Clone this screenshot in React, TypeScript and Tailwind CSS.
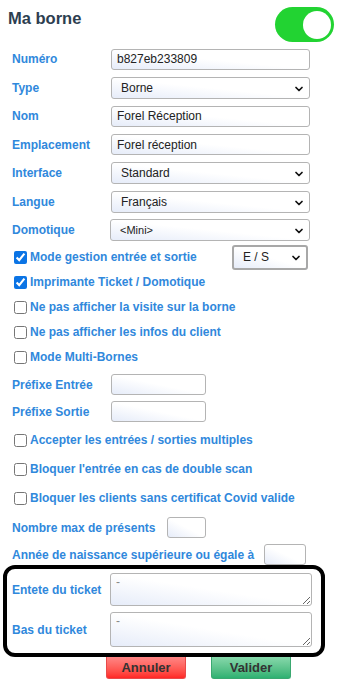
import { ChevronDown } from 'lucide-react';

const font = { fontFamily: '"Liberation Sans", Arial, sans-serif' };

const fieldBg =
  'border border-[#b4b4b4] rounded-[3px] bg-gradient-to-tr from-[#e6ecf9] via-white to-white text-[12px] text-[#222] outline-none';

function TextRow({ label, value }: { label: string; value?: string }) {
  return (
    <div className="flex h-[28.5px] items-center pl-3">
      <label className="w-[99px] text-[12px] font-bold text-[#3088dc]">{label}</label>
      <input readOnly value={value ?? ''} className={`${fieldBg} h-[21px] w-[199px] px-[5px]`} />
    </div>
  );
}

function SelectRow({ label, value, wide }: { label: string; value: string; wide?: boolean }) {
  return (
    <div className="flex h-[28.5px] items-center pl-3">
      <label className={`${wide ? 'w-[98px]' : 'w-[99px]'} text-[12px] font-bold text-[#3088dc]`}>{label}</label>
      <div className={`${fieldBg} relative flex h-[22px] ${wide ? 'w-[200px]' : 'w-[199px]'} items-center pl-[9px]`}>
        <span className={value.startsWith('<') ? 'text-[11px]' : ''}>{value}</span>
        <ChevronDown className="absolute right-[4px] top-[5px] h-[12px] w-[12px] text-[#111]" strokeWidth={3.5} />
      </div>
    </div>
  );
}

function CheckRow({ label, checked, h }: { label: string; checked?: boolean; h: string }) {
  return (
    <div className={`flex ${h} items-center pl-[14px]`}>
      <input type="checkbox" readOnly checked={!!checked} className="m-0 h-[13px] w-[13px] accent-[#0b74e5]" />
      <span className="ml-[3px] text-[12px] font-bold text-[#3088dc]">{label}</span>
    </div>
  );
}

export default function App() {
  return (
    <div style={font} className="h-[690px] w-[343px] overflow-hidden bg-white">
      <div className="flex h-[45px] items-start justify-between">
        <h1 className="pl-2 pt-[6px] text-[16.5px] font-bold text-[#2d3e50]">Ma borne</h1>
        <div className="mr-[9px] mt-[7px] flex h-[35px] w-[59px] items-center justify-end rounded-full bg-[#22d332] pr-[3px]">
          <div className="h-[28px] w-[28px] rounded-full bg-white" />
        </div>
      </div>

      <TextRow label="Numéro" value="b827eb233809" />
      <SelectRow label="Type" value="Borne" />
      <TextRow label="Nom" value="Forel Réception" />
      <TextRow label="Emplacement" value="Forel réception" />
      <SelectRow label="Interface" value="Standard" />
      <SelectRow label="Langue" value="Français" />
      <SelectRow label="Domotique" value="<Mini>" wide />

      <div className="flex h-[25px] items-center pl-[14px]">
        <input type="checkbox" readOnly checked className="m-0 h-[13px] w-[13px] accent-[#0b74e5]" />
        <span className="ml-[3px] w-[202px] text-[12px] font-bold text-[#3088dc]">Mode gestion entrée et sortie</span>
        <div className="relative flex h-[25px] w-[76px] items-center rounded-[3px] border-2 border-[#a8a8a8] bg-gradient-to-tr from-[#e6ecf9] via-white to-white pl-[9px] text-[12px] text-[#222]">
          E / S
          <ChevronDown className="absolute right-[4px] top-[5px] h-[12px] w-[12px] text-[#111]" strokeWidth={3.5} />
        </div>
      </div>
      <CheckRow label="Imprimante Ticket / Domotique" checked h="h-[25px]" />
      <CheckRow label="Ne pas afficher la visite sur la borne" h="h-[25px]" />
      <CheckRow label="Ne pas afficher les infos du client" h="h-[25px]" />
      <CheckRow label="Mode Multi-Bornes" h="h-[25px]" />

      <div className="mt-[1.5px] flex h-[27px] items-center pl-3">
        <label className="w-[99px] text-[12px] font-bold text-[#3088dc]">Préfixe Entrée</label>
        <input readOnly className={`${fieldBg} h-[21px] w-[95px]`} />
      </div>
      <div className="flex h-[27px] items-center pl-3">
        <label className="w-[99px] text-[12px] font-bold text-[#3088dc]">Préfixe Sortie</label>
        <input readOnly className={`${fieldBg} h-[21px] w-[95px]`} />
      </div>

      <CheckRow label="Accepter les entrées / sorties multiples" h="h-[30px]" />
      <CheckRow label="Bloquer l'entrée en cas de double scan" h="h-[28px]" />
      <CheckRow label="Bloquer les clients sans certificat Covid valide" h="h-[30px]" />

      <div className="flex h-[29px] items-center pl-3">
        <label className="w-[155px] text-[12px] font-bold text-[#3088dc]">Nombre max de présents</label>
        <input readOnly className={`${fieldBg} h-[21px] w-[39px]`} />
      </div>
      <div className="flex h-[25px] items-center pl-3">
        <label className="w-[252px] text-[12px] font-bold text-[#3088dc]">Année de naissance supérieure ou égale à</label>
        <input readOnly className={`${fieldBg} h-[21px] w-[42px]`} />
      </div>

      <div className="relative z-10 -mt-[2px] ml-[3px] flex h-[92px] w-[322px] flex-col gap-[6px] rounded-[12px] border-4 border-black pl-[5px] pt-[4px]">
        <div className="flex items-center">
          <label className="w-[98px] text-[12px] font-bold text-[#3088dc]">Entete du ticket</label>
          <textarea readOnly defaultValue="-" className={`${fieldBg} h-[33px] w-[202px] resize px-[5px] pt-[4px] text-[6px] leading-[8px] text-[#888]`} />
        </div>
        <div className="flex items-center">
          <label className="w-[98px] text-[12px] font-bold text-[#3088dc]">Bas du ticket</label>
          <textarea readOnly defaultValue="-" className={`${fieldBg} h-[35px] w-[202px] resize px-[5px] pt-[4px] text-[6px] leading-[8px] text-[#888]`} />
        </div>
      </div>

      <div className="flex gap-[25px] pl-[106px]">
        <button className="h-[22px] w-[80px] rounded-b-[3px] border border-t-0 border-[#e84a4a] bg-gradient-to-b from-[#ff8585] to-[#ff2525] text-[13px] font-bold text-[#333]">
          Annuler
        </button>
        <button className="h-[22px] w-[80px] rounded-b-[3px] border border-t-0 border-[#3aa870] bg-gradient-to-b from-[#86d8ab] to-[#2db172] text-[13px] font-bold text-[#333]">
          Valider
        </button>
      </div>
    </div>
  );
}
